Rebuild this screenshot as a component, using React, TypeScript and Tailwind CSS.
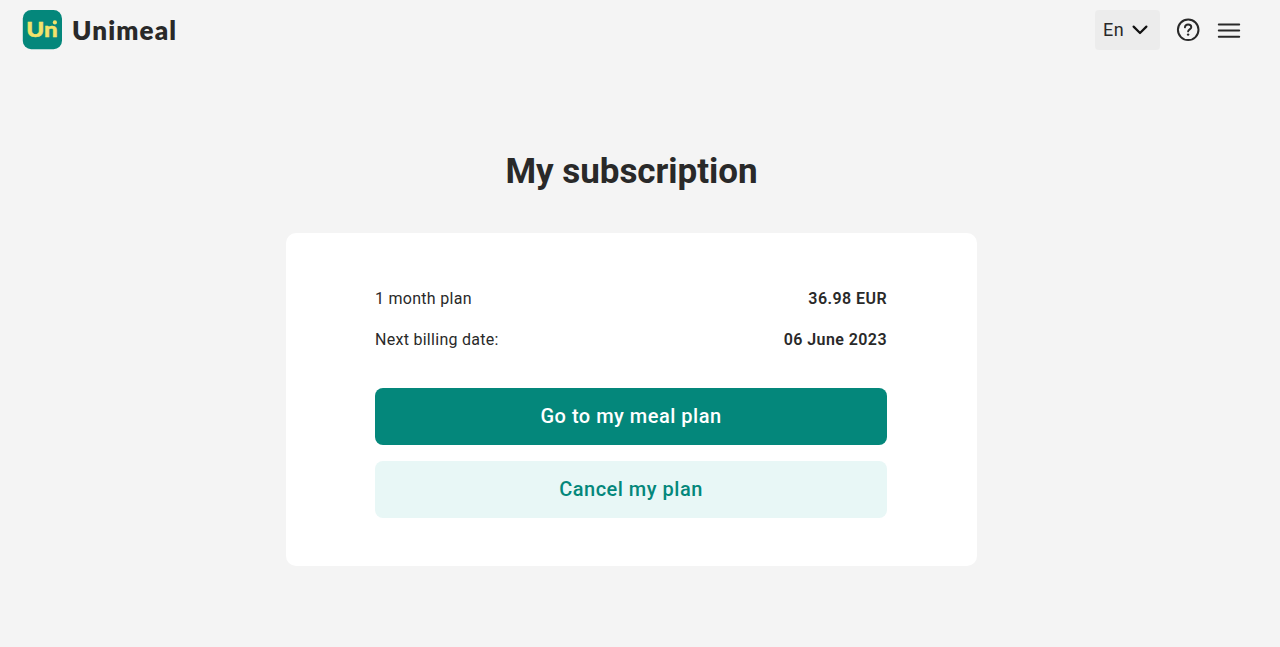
import type { ReactNode } from "react";

function LogoMark() {
  return (
    <svg
      className="h-10 w-10 font-['Lato',sans-serif] text-[21px] font-black"
      viewBox="0 0 40 40"
      fill="none"
    >
      <rect x="0.8" y="0" width="39.2" height="39.2" rx="8.5" fill="#04877B" />
      <text
        x="4.3"
        y="26.9"
        textLength="31.4"
        lengthAdjust="spacingAndGlyphs"
        fill="#F2E36B"
        stroke="#F2E36B"
        strokeWidth="0.4"
      >
        Un
      </text>
      <circle cx="32.9" cy="12.4" r="2.1" fill="#F2E36B" />
    </svg>
  );
}

function Header() {
  return (
    <header className="flex h-[60px] items-center justify-between pr-[39px] pl-[22px]">
      <div className="flex items-center">
        <LogoMark />
        <span className="ml-[10px] pb-px font-['Lato',sans-serif] text-[26px] leading-10 font-extrabold tracking-[1.15px] text-[#292929]">
          Unimeal
        </span>
      </div>

      <div className="flex items-center">
        {/* Language */}
        <button className="flex h-10 w-[65px] items-center justify-between rounded-[4px] bg-[#ececec] pr-3 pl-2 text-[18px]">
          <span className="pb-0.5 tracking-[0.4px]">En</span>
          <svg width="16" height="10" viewBox="0 0 16 10" fill="none">
            <path
              d="M1.6 1.6L8 8L14.4 1.6"
              stroke="#111111"
              strokeWidth="2.2"
              strokeLinecap="round"
              strokeLinejoin="round"
            />
          </svg>
        </button>

        {/* Help */}
        <button className="ml-4" aria-label="Help">
          <svg width="24" height="24" viewBox="0 0 24 24" fill="none">
            <circle cx="12.2" cy="11.8" r="10.3" stroke="#292929" strokeWidth="2" />
            <path
              d="M8.9 9.3C9.1 7.5 10.3 6.5 12.1 6.5C13.9 6.5 15.3 7.6 15.3 9.2C15.3 11.3 12.1 11.4 12.1 13.4"
              stroke="#292929"
              strokeWidth="1.9"
              strokeLinecap="round"
              strokeLinejoin="round"
            />
            <circle cx="12.1" cy="16.6" r="1.2" fill="#292929" />
          </svg>
        </button>

        {/* Menu */}
        <button className="ml-4" aria-label="Menu">
          <svg width="25" height="24" viewBox="0 0 25 24" fill="none">
            <path
              d="M2.8 6.4H23.2M2.8 12.5H23.2M2.8 18.8H23.2"
              stroke="#292929"
              strokeWidth="2"
              strokeLinecap="round"
            />
          </svg>
        </button>
      </div>
    </header>
  );
}

function Row({ label, children }: { label: string; children: ReactNode }) {
  return (
    <div className="flex h-6 items-center justify-between text-[16px]">
      <span className="tracking-[0.28px]">{label}</span>
      <span className="font-semibold tracking-[0.43px]">{children}</span>
    </div>
  );
}

export default function App() {
  return (
    <div className="min-h-screen bg-[#f4f4f4] font-['Roboto',sans-serif] text-[#292929]">
      <Header />

      <main className="flex flex-col items-center pt-[88px] pr-[17px]">
        <h1 className="text-[35px] leading-12 font-bold tracking-[-0.05px]">
          My subscription
        </h1>

        <section className="mt-[37px] h-[333px] w-[691px] rounded-[10px] bg-white pt-[54px] pr-[90px] pl-[89px]">
          <div className="flex flex-col gap-[17px]">
            <Row label="1 month plan">36.98 EUR</Row>
            <Row label="Next billing date:">06 June 2023</Row>
          </div>

          <div className="mt-9 flex flex-col gap-4">
            <button className="h-[57px] w-full rounded-lg bg-[#04877b] pb-0.5 text-[20px] font-medium tracking-[0.5px] text-white">
              Go to my meal plan
            </button>
            <button className="h-[57px] w-full rounded-lg bg-[#e8f7f6] pb-0.5 text-[20px] font-medium tracking-[0.5px] text-[#04877b]">
              Cancel my plan
            </button>
          </div>
        </section>
      </main>
    </div>
  );
}
